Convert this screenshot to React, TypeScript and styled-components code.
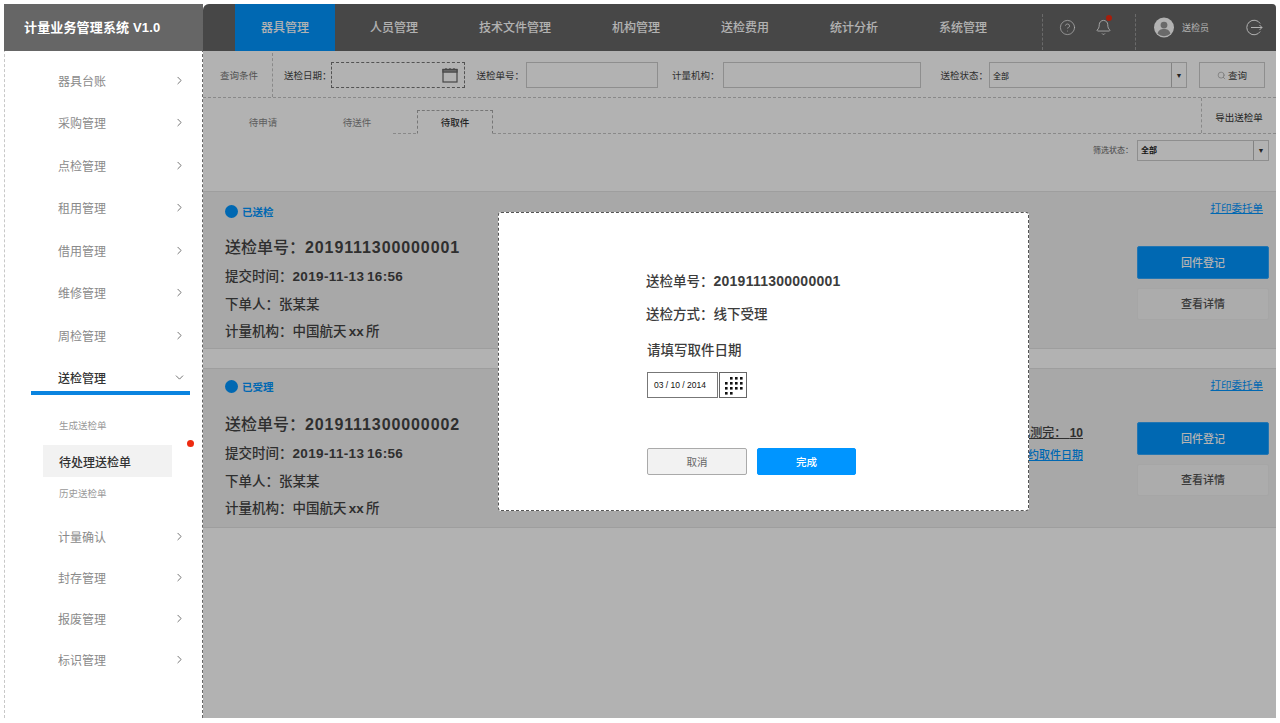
import React, { FC } from 'react';
import styled, { createGlobalStyle } from 'styled-components';
import { Bell, ChevronDown, ChevronRight, CircleHelp, Search } from 'lucide-react';

const GlobalStyle = createGlobalStyle`
  html, body {
    margin: 0;
    background: #fff;
    font-family: "Liberation Sans", "Noto Sans CJK SC", sans-serif;
  }
  * { box-sizing: border-box; }
`;

const Page = styled.div`
  display: flex;
  width: 1280px;
  height: 723px;
  padding: 4px 4px 5px 4px;
  overflow: hidden;
`;

const Left = styled.aside`
  width: 199px;
  flex: none;
  display: flex;
  flex-direction: column;
  border-left: 1px dashed #c8c8c8;
`;

const Brand = styled.div`
  height: 47px;
  margin-left: -1px;
  flex: none;
  display: flex;
  align-items: center;
  padding: 0 0 2px 20px;
  background: #666;
  color: #fff;
  font-size: 13px;
  font-weight: 700;
  letter-spacing: 0.15px;
`;

const SideList = styled.nav`
  padding-top: 8px;
  display: flex;
  flex-direction: column;
`;

const SideRow = styled.div<{ $active?: boolean; $h?: number }>`
  height: ${(p) => p.$h ?? 42.5}px;
  flex: none;
  display: flex;
  align-items: center;
  justify-content: space-between;
  padding: 0 17px 0 53px;
  font-size: 12px;
  color: ${(p) => (p.$active ? '#333' : '#8a8a8a')};
  font-weight: ${(p) => (p.$active ? 500 : 400)};
  svg { color: #555; }
`;

const ActiveBar = styled.div`
  height: 4px;
  margin: -8px 13px 0 26px;
  background: #0a84e0;
`;

const SubList = styled.div`
  display: flex;
  flex-direction: column;
  position: relative;
  padding: 19px 0 0 38px;
  margin-bottom: 12px;
`;

const SubItem = styled.div<{ $current?: boolean }>`
  width: 129px;
  height: ${(p) => (p.$current ? 32 : 22)}px;
  margin: ${(p) => (p.$current ? '9px 0 5px' : '0')};
  display: flex;
  align-items: center;
  padding-left: 16px;
  font-size: ${(p) => (p.$current ? 12 : 9.5)}px;
  color: ${(p) => (p.$current ? '#333' : '#999')};
  font-weight: ${(p) => (p.$current ? 500 : 400)};
  background: ${(p) => (p.$current ? '#f2f2f2' : 'transparent')};
`;

const SubDot = styled.span`
  position: absolute;
  left: 182px;
  top: 45px;
  width: 7px;
  height: 7px;
  border-radius: 50%;
  background: #ee2a10;
`;

const Right = styled.main`
  position: relative;
  flex: 1;
  display: flex;
  flex-direction: column;
  border-left: 1px dashed #666;
  margin-left: -1px;
`;

const TopNav = styled.header`
  height: 47px;
  flex: none;
  display: flex;
  align-items: stretch;
  gap: 9px;
  padding-left: 32px;
  background: #666;
  border-radius: 6px 4px 0 0;
`;

const NavItem = styled.div<{ $active?: boolean }>`
  display: flex;
  align-items: center;
  padding: 0 26px 2px;
  font-size: 12px;
  font-weight: 500;
  color: #fff;
  background: ${(p) => (p.$active ? '#0095ff' : 'transparent')};
`;

const NavTools = styled.div`
  margin-left: auto;
  display: flex;
  align-items: center;
  height: 100%;
  color: #fff;
`;

const ToolDivider = styled.span`
  height: 36px;
  margin-top: 9px;
  border-left: 1px dashed #999;
`;

const ToolCell = styled.div<{ $w: number; $ml?: number }>`
  width: ${(p) => p.$w}px;
  margin-left: ${(p) => p.$ml ?? 0}px;
  flex: none;
  display: flex;
  align-items: center;
  justify-content: center;
  position: relative;
  padding-bottom: 1px;
`;

const BellDot = styled.span`
  position: absolute;
  right: 3px;
  top: -4px;
  width: 6px;
  height: 6px;
  border-radius: 50%;
  background: #f02a10;
`;

const UserName = styled.span`
  margin-left: 8px;
  font-size: 9px;
  color: #fff;
`;

const QueryBar = styled.section`
  height: 45px;
  margin-top: 2px;
  flex: none;
  display: flex;
  align-items: center;
  border-bottom: 1px dashed #c4c4c4;
  font-size: 9.5px;
  color: #444;
  background: #fff;
`;

const QueryTitle = styled.div`
  width: 70px;
  height: 100%;
  flex: none;
  display: flex;
  align-items: center;
  justify-content: center;
  padding-left: 3px;
  color: #777;
  font-size: 9.5px;
  border-right: 1px dashed #c4c4c4;
`;

const Field = styled.label<{ $ml: number }>`
  display: flex;
  align-items: center;
  margin-left: ${(p) => p.$ml}px;
  white-space: nowrap;
`;

const TextBox = styled.div<{ $w: number; $dashed?: boolean; $lm: number }>`
  width: ${(p) => p.$w}px;
  height: 26px;
  margin-left: ${(p) => p.$lm}px;
  display: flex;
  align-items: center;
  justify-content: flex-end;
  padding-right: 6px;
  color: #555;
  border: 1px ${(p) => (p.$dashed ? 'dashed #777' : 'solid #ccc')};
`;

const SelectBox = styled.div<{ $w: number; $h: number; $lm: number; $bold?: boolean }>`
  width: ${(p) => p.$w}px;
  height: ${(p) => p.$h}px;
  margin-left: ${(p) => p.$lm}px;
  display: flex;
  align-items: center;
  justify-content: space-between;
  padding-left: 3px;
  font-size: 8px;
  font-weight: ${(p) => (p.$bold ? 700 : 400)};
  color: #222;
  border: 1px solid #ccc;
`;

const SelectArrow = styled.span`
  align-self: stretch;
  width: 15px;
  display: flex;
  align-items: center;
  justify-content: center;
  border-left: 1px solid #bbb;
  font-size: 7px;
  color: #333;
`;

const QueryButton = styled.button`
  width: 66px;
  height: 26px;
  margin-left: 12px;
  display: flex;
  align-items: center;
  justify-content: center;
  gap: 2px;
  padding: 0;
  border: 1px solid #ccc;
  background: transparent;
  color: #444;
  font: inherit;
  svg { color: #aaa; }
`;

const TabBar = styled.div`
  height: 36px;
  flex: none;
  display: flex;
  align-items: flex-end;
  position: relative;
  background: #fff;
  border-bottom: 1px dashed #c4c4c4;
  font-size: 9.5px;
`;

const Tab = styled.div<{ $active?: boolean; $w: number; $mr?: number }>`
  width: ${(p) => p.$w}px;
  margin-right: ${(p) => p.$mr ?? 0}px;
  height: 24px;
  margin-bottom: -1px;
  display: flex;
  align-items: center;
  justify-content: center;
  color: ${(p) => (p.$active ? '#333' : '#888')};
  font-weight: ${(p) => (p.$active ? 500 : 400)};
  background: #fff;
  border: 1px dashed ${(p) => (p.$active ? '#aaa' : 'transparent')};
  border-bottom: 1px solid ${(p) => (p.$active ? '#fff' : 'transparent')};
`;

const ExportCell = styled.div`
  margin-left: auto;
  width: 75px;
  height: 100%;
  display: flex;
  align-items: center;
  justify-content: center;
  padding-top: 2px;
  color: #333;
  border-left: 1px dashed #c4c4c4;
`;

const FilterRow = styled.div`
  height: 57px;
  flex: none;
  display: flex;
  align-items: flex-start;
  justify-content: flex-end;
  padding: 6px 7px 0 0;
  font-size: 8px;
  color: #666;
  background: #fff;
  line-height: 21px;
`;

const Cards = styled.div`
  flex: 1;
  display: flex;
  flex-direction: column;
  gap: 19px;
  background: #fff;
`;

const Card = styled.article<{ $h: number }>`
  height: ${(p) => p.$h}px;
  flex: none;
  display: flex;
  justify-content: space-between;
  padding: 10px 7px 0 22px;
  background: #f1f1f1;
  border-top: 1px solid #e2e2e2;
  border-bottom: 1px solid #e2e2e2;
`;

const CardMain = styled.div<{ $lift: number }>`
  display: flex;
  flex-direction: column;
  margin-top: ${(p) => 1 - p.$lift}px;
  color: #444;
`;

const Status = styled.div`
  height: 16px;
  display: flex;
  align-items: center;
  gap: 4px;
  font-size: 10.5px;
  font-weight: 700;
  color: #0095ff;
  &::before {
    content: '';
    width: 13px;
    height: 13px;
    border-radius: 50%;
    background: #0095ff;
  }
`;

const OrderNo = styled.div<{ $lift: number }>`
  margin-top: ${(p) => 17 + p.$lift}px;
  font-size: 16px;
  line-height: 24px;
  font-weight: 500;
`;

const Digits = styled.span<{ $spacing?: number; $size?: number }>`
  font-weight: 700;
  font-size: ${(p) => (p.$size ? `${p.$size}px` : 'inherit')};
  letter-spacing: ${(p) => p.$spacing ?? 0}px;
`;

const Meta = styled.div<{ $mt: number }>`
  margin-top: ${(p) => p.$mt}px;
  font-size: 13.5px;
  line-height: 20px;
  font-weight: 500;
  word-spacing: -1.5px;
`;

const CardSide = styled.div`
  width: 132px;
  display: flex;
  flex-direction: column;
  align-items: flex-end;
`;

const PrintLink = styled.a`
  height: 16px;
  margin-right: 6px;
  font-size: 10.5px;
  line-height: 12px;
  color: #0095ff;
  text-decoration: underline;
`;

const ActionButton = styled.button<{ $primary?: boolean; $mt: number }>`
  width: 132px;
  height: ${(p) => (p.$primary ? 33 : 32)}px;
  margin-top: ${(p) => p.$mt}px;
  padding: 0 0 2px;
  font: 500 11px "Liberation Sans", "Noto Sans CJK SC", sans-serif;
  border-radius: 2px;
  color: ${(p) => (p.$primary ? '#fff' : '#555')};
  background: ${(p) => (p.$primary ? '#0095ff' : '#f7f7f7')};
  border: 1px solid ${(p) => (p.$primary ? '#33aaff' : '#eee')};
`;

const CountNote = styled.div`
  display: flex;
  flex-direction: column;
  align-items: flex-end;
  margin: 44px 54px 0 auto;
  font-size: 12px;
  font-weight: 500;
  color: #444;
  white-space: nowrap;
`;

const CountLine = styled.span`
  height: 23px;
  text-decoration: underline;
`;

const CountLink = styled.a`
  font-size: 11px;
  color: #0095ff;
  text-decoration: underline;
`;

const Overlay = styled.div`
  position: absolute;
  inset: 0;
  padding: 208px 0 0 295px;
  background: rgba(0, 0, 0, 0.3);
  border-radius: 6px 4px 0 0;
`;

const Modal = styled.div`
  width: 531px;
  height: 299px;
  display: flex;
  flex-direction: column;
  padding: 59px 0 0 147px;
  background: #fff;
  border: 1px dashed #555;
  border-radius: 3px;
  color: #3c3c3c;
`;

const ModalLine = styled.div<{ $mt: number; $ml?: number }>`
  margin-top: ${(p) => p.$mt}px;
  margin-left: ${(p) => p.$ml ?? 0}px;
  font-size: 13.5px;
  line-height: 18px;
  font-weight: 500;
`;

const DateRow = styled.div`
  display: flex;
  gap: 1px;
  margin: 12px 0 0 1px;
`;

const DateInput = styled.div`
  width: 71px;
  height: 26px;
  display: flex;
  align-items: center;
  padding-left: 6px;
  font-size: 8.5px;
  color: #111;
  border: 1px solid #777;
`;

const DateButton = styled.div`
  width: 28px;
  height: 26px;
  display: flex;
  align-items: center;
  justify-content: center;
  border: 1px solid #666;
`;

const ModalActions = styled.div`
  display: flex;
  gap: 10px;
  margin: 50px 0 0 1px;
`;

const ModalButton = styled.button<{ $primary?: boolean }>`
  width: ${(p) => (p.$primary ? 99 : 100)}px;
  height: 27px;
  padding: 0;
  font: ${(p) => (p.$primary ? 500 : 400)} 10.5px "Liberation Sans", "Noto Sans CJK SC", sans-serif;
  border-radius: 2px;
  color: ${(p) => (p.$primary ? '#fff' : '#666')};
  background: ${(p) => (p.$primary ? '#0095ff' : '#f2f2f2')};
  border: 1px solid ${(p) => (p.$primary ? '#0095ff' : '#aaa')};
`;

const CalendarIcon = () => (
  <svg width="16" height="16" viewBox="0 0 16 16" fill="none" stroke="#666" strokeWidth="1.2">
    <rect x="1" y="2.5" width="14" height="12.5" />
    <rect x="1" y="2.5" width="14" height="2.6" fill="#999" />
    <path d="M4 1v2M8 1v2M12 1v2" />
  </svg>
);

const DotsIcon = () => {
  const dots: number[][] = [
    [1, 0], [2, 0], [3, 0],
    [0, 1], [1, 1], [2, 1], [3, 1],
    [0, 2], [1, 2], [2, 2], [3, 2],
    [0, 3], [1, 3],
  ];
  return (
    <svg width="19" height="19" viewBox="0 0 19 19" fill="#111">
      {dots.map(([x, y]) => (
        <rect key={`${x}-${y}`} x={x * 5 + 1} y={y * 5 + 1} width="2.6" height="2.6" />
      ))}
    </svg>
  );
};

const LogoutIcon = () => (
  <svg width="17" height="17" viewBox="0 0 17 17" fill="none" stroke="#fff" strokeWidth="1">
    <path d="M14.2 4.5A7.3 7.3 0 1 0 14.2 12.5" />
    <path d="M5 8.5h11M13.5 6l2.5 2.5-2.5 2.5" />
  </svg>
);

const AvatarIcon = () => (
  <svg width="21" height="21" viewBox="0 0 21 21">
    <circle cx="10.5" cy="10.5" r="10.5" fill="#fff" />
    <circle cx="10.5" cy="8" r="3.6" fill="#999" />
    <path d="M3.8 17c.6-3.6 3.4-5 6.7-5s6.1 1.4 6.7 5a10 10 0 0 1-13.4 0z" fill="#999" />
  </svg>
);

const menuTop = ['器具台账', '采购管理', '点检管理', '租用管理', '借用管理', '维修管理', '周检管理'];
const menuBottom = ['计量确认', '封存管理', '报废管理', '标识管理'];
const navItems = ['器具管理', '人员管理', '技术文件管理', '机构管理', '送检费用', '统计分析', '系统管理'];

const OrderCard: FC<{
  h: number;
  status: string;
  no: string;
  counted?: boolean;
  printGap: number;
  lift?: number;
}> = ({ h, status, no, counted, printGap, lift = 0 }) => (
  <Card $h={h}>
    <CardMain $lift={lift}>
      <Status>{status}</Status>
      <OrderNo $lift={lift}>
        送检单号：<Digits $spacing={0.9}>{no}</Digits>
      </OrderNo>
      <Meta $mt={7}>
        提交时间：<Digits $spacing={0.35}>2019-11-13 16:56</Digits>
      </Meta>
      <Meta $mt={8}>下单人：张某某</Meta>
      <Meta $mt={7}>
        计量机构：中国航天 <Digits>xx</Digits> 所
      </Meta>
    </CardMain>
    {counted && (
      <CountNote>
        <CountLine>
          已测完： <Digits>10</Digits>
        </CountLine>
        <CountLink>预约取件日期</CountLink>
      </CountNote>
    )}
    <CardSide>
      <PrintLink>打印委托单</PrintLink>
      <ActionButton $primary $mt={printGap}>回件登记</ActionButton>
      <ActionButton $mt={9}>查看详情</ActionButton>
    </CardSide>
  </Card>
);

export default function App() {
  return (
    <>
      <GlobalStyle />
      <Page>
        <Left>
          <Brand>计量业务管理系统 V1.0</Brand>
          <SideList>
            {menuTop.map((item) => (
              <SideRow key={item}>
                {item}
                <ChevronRight size={13} strokeWidth={1.5} />
              </SideRow>
            ))}
            <SideRow $active>
              送检管理
              <ChevronDown size={13} strokeWidth={1.5} />
            </SideRow>
            <ActiveBar />
            <SubList>
              <SubItem>生成送检单</SubItem>
              <SubItem $current>待处理送检单</SubItem>
              <SubItem>历史送检单</SubItem>
              <SubDot />
            </SubList>
            {menuBottom.map((item) => (
              <SideRow key={item} $h={41}>
                {item}
                <ChevronRight size={13} strokeWidth={1.5} />
              </SideRow>
            ))}
          </SideList>
        </Left>
        <Right>
          <TopNav>
            {navItems.map((item, i) => (
              <NavItem key={item} $active={i === 0}>
                {item}
              </NavItem>
            ))}
            <NavTools>
              <ToolDivider />
              <ToolCell $w={50}>
                <CircleHelp size={17} strokeWidth={1} />
              </ToolCell>
              <ToolCell $w={22}>
                <Bell size={17} strokeWidth={1.2} />
                <BellDot />
              </ToolCell>
              <ToolCell $w={20} />
              <ToolDivider />
              <ToolCell $w={20} $ml={18}>
                <AvatarIcon />
              </ToolCell>
              <UserName>送检员</UserName>
              <ToolCell $w={44} $ml={23}>
                <LogoutIcon />
              </ToolCell>
            </NavTools>
          </TopNav>
          <QueryBar>
            <QueryTitle>查询条件</QueryTitle>
            <Field $ml={11}>
              送检日期：
              <TextBox $w={134} $lm={-1} $dashed>
                <CalendarIcon />
              </TextBox>
            </Field>
            <Field $ml={12}>
              送检单号：
              <TextBox $w={132} $lm={2} />
            </Field>
            <Field $ml={14}>
              计量机构：
              <TextBox $w={198} $lm={3} />
            </Field>
            <Field $ml={20}>
              送检状态：
              <SelectBox $w={198} $h={26} $lm={1}>
                全部
                <SelectArrow>▼</SelectArrow>
              </SelectBox>
            </Field>
            <QueryButton>
              <Search size={9} />
              查询
            </QueryButton>
          </QueryBar>
          <TabBar>
            <Tab $w={120}>待申请</Tab>
            <Tab $w={68} $mr={26}>待送件</Tab>
            <Tab $w={76} $active>待取件</Tab>
            <ExportCell>导出送检单</ExportCell>
          </TabBar>
          <FilterRow>
            筛选状态：
            <SelectBox $w={132} $h={21} $lm={4} $bold>
              全部
              <SelectArrow>▼</SelectArrow>
            </SelectBox>
          </FilterRow>
          <Cards>
            <OrderCard h={158} status="已送检" no="2019111300000001" printGap={28} />
            <OrderCard h={160} status="已受理" no="2019111300000002" counted printGap={27} lift={2} />
          </Cards>
          <Overlay>
            <Modal>
              <ModalLine $mt={0}>
                送检单号：<Digits $size={14} $spacing={0.25}>2019111300000001</Digits>
              </ModalLine>
              <ModalLine $mt={15}>送检方式：线下受理</ModalLine>
              <ModalLine $mt={18} $ml={1}>请填写取件日期</ModalLine>
              <DateRow>
                <DateInput>03 / 10 / 2014</DateInput>
                <DateButton>
                  <DotsIcon />
                </DateButton>
              </DateRow>
              <ModalActions>
                <ModalButton>取消</ModalButton>
                <ModalButton $primary>完成</ModalButton>
              </ModalActions>
            </Modal>
          </Overlay>
        </Right>
      </Page>
    </>
  );
}
